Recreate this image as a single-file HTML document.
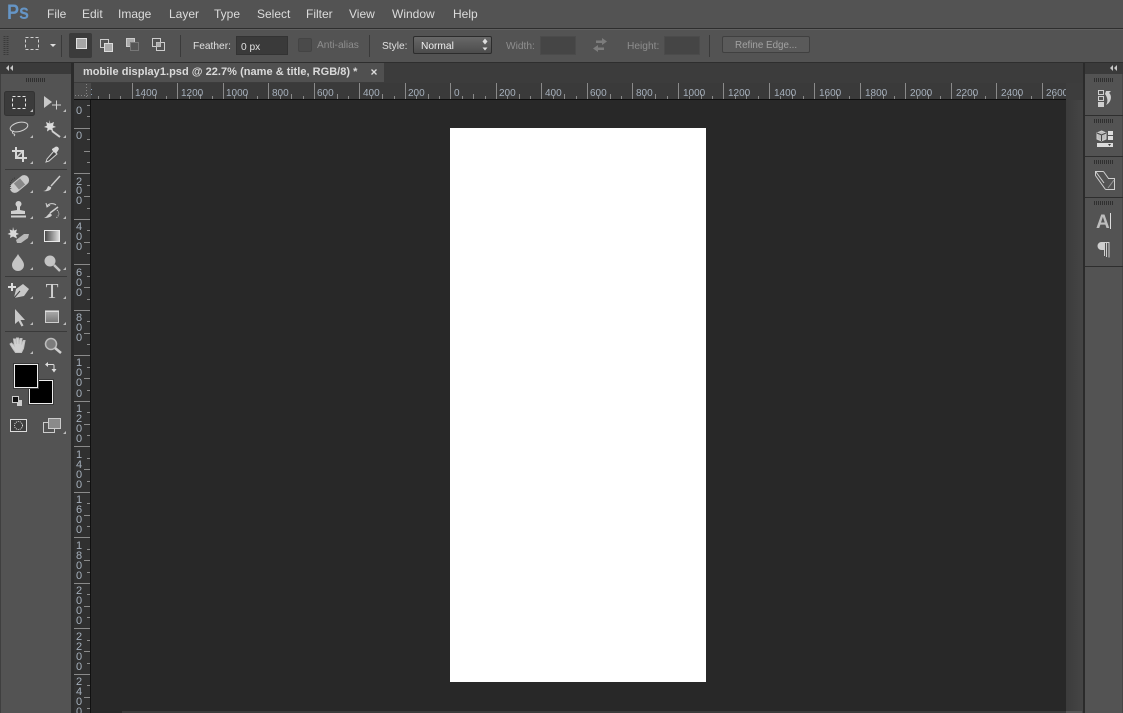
<!DOCTYPE html>
<html><head><meta charset="utf-8"><title>Photoshop</title>
<style>
html,body{margin:0;padding:0;background:#535353}
body{width:1123px;height:713px;position:relative;overflow:hidden;font-family:"Liberation Sans",sans-serif;font-size:11px}
div,span.t{position:absolute}
.m{position:absolute;top:7px;color:#dcdcdc;font-size:12px;line-height:14px;white-space:nowrap}
.o{position:absolute;color:#e0e0e0;font-size:10.2px;line-height:13px;white-space:nowrap}
.d{color:#8e8e8e}
.sep{background:#3a3a3a;width:1px;top:35px;height:22px}
.inp{background:#454545;border:1px solid #4b4b4b;box-sizing:border-box}
svg{position:absolute;left:0;top:0;overflow:visible}
</style></head><body>
<div style="left:0;top:0;width:1123px;height:28px;background:#535353"></div>
<div style="left:0;top:28px;width:1123px;height:1px;background:#2e2e2e"></div>
<div style="left:0;top:29px;width:1123px;height:1px;background:#606060"></div>
<div style="left:0;top:30px;width:1123px;height:32px;background:#535353"></div>
<div style="left:0;top:62px;width:1123px;height:1px;background:#2e2e2e"></div>
<div style="left:7px;top:1px;color:#6595c6;font-weight:bold;font-size:21px;line-height:24px;transform:scaleX(.86);transform-origin:0 0">Ps</div>
<span class="m" style="left:47px">File</span><span class="m" style="left:82px">Edit</span><span class="m" style="left:118px">Image</span><span class="m" style="left:169px">Layer</span><span class="m" style="left:214px">Type</span><span class="m" style="left:257px">Select</span><span class="m" style="left:306px">Filter</span><span class="m" style="left:349px">View</span><span class="m" style="left:392px">Window</span><span class="m" style="left:453px">Help</span>

<!-- options -->
<div style="left:69px;top:33px;width:23px;height:25px;background:#3b3b3b;border-radius:2px"></div>
<div class="sep" style="left:61px"></div><div class="sep" style="left:180px"></div><div class="sep" style="left:369px"></div><div class="sep" style="left:709px"></div>
<span class="o" style="left:193px;top:40px">Feather:</span>
<div style="left:236px;top:36px;width:52px;height:19px;background:#3a3a3a;border:1px solid #333;box-sizing:border-box"></div>
<span class="o" style="left:241px;top:41px">0 px</span>
<div style="left:298px;top:38px;width:14px;height:14px;background:#4a4a4a;border:1px solid #444;border-radius:2px;box-sizing:border-box"></div>
<span class="o d" style="left:317px;top:39px">Anti-alias</span>
<span class="o" style="left:382px;top:40px">Style:</span>
<div style="left:413px;top:36px;width:79px;height:18px;box-sizing:border-box;border:1px solid #2c2c2c;border-radius:2px;background:linear-gradient(#686868,#4c4c4c)"></div>
<span class="o" style="left:421px;top:40px;color:#f0f0f0">Normal</span>
<span class="o d" style="left:506px;top:40px">Width:</span>
<div class="inp" style="left:540px;top:36px;width:36px;height:19px"></div>
<span class="o d" style="left:627px;top:40px">Height:</span>
<div class="inp" style="left:664px;top:36px;width:36px;height:19px"></div>
<div style="left:722px;top:36px;width:88px;height:17px;box-sizing:border-box;border:1px solid #404040;border-radius:2px;background:#5a5a5a"></div>
<span class="o" style="left:735px;top:39px;color:#a2a2a2;font-size:9.8px">Refine Edge...</span>

<!-- tab strip -->
<div style="left:74px;top:63px;width:1009px;height:20px;background:#3c3c3c"></div>
<div style="left:74px;top:63px;width:310px;height:19px;background:#505050"></div>
<span class="o" style="left:83px;top:66px;font-weight:bold;font-size:11px;color:#dadada;letter-spacing:.03px">mobile display1.psd @ 22.7% (name &amp; title, RGB/8) *</span>
<!-- structure -->
<div style="left:0;top:63px;width:72px;height:11px;background:#3a3a3a"></div>
<div style="left:0;top:74px;width:1px;height:639px;background:#3f3f3f"></div>
<div style="left:71px;top:63px;width:3px;height:650px;background:#2b2b2b"></div>
<div style="left:74px;top:83px;width:992px;height:16px;background:#3a3a3a"></div>
<div style="left:74px;top:99px;width:16px;height:614px;background:#303030"></div>
<div style="left:90px;top:99px;width:1px;height:614px;background:#111"></div>
<div style="left:74px;top:99px;width:992px;height:1px;background:#0e0e0e"></div>
<div style="left:91px;top:100px;width:975px;height:613px;background:#282828"></div>
<div style="left:450px;top:128px;width:256px;height:554px;background:#fff"></div>
<div style="left:1066px;top:83px;width:17px;height:630px;background:linear-gradient(90deg,#3c3c3c,#454545)"></div>
<div style="left:122px;top:711px;width:944px;height:2px;background:#3a3a3a"></div>
<div style="left:1066px;top:711px;width:16px;height:2px;background:#555"></div>
<div style="left:1083px;top:63px;width:2px;height:650px;background:#2b2b2b"></div>
<div style="left:1122px;top:74px;width:1px;height:639px;background:#454545"></div>
<div style="left:1085px;top:63px;width:38px;height:11px;background:#3a3a3a"></div>
<div style="left:1085px;top:115px;width:38px;height:1px;background:#2e2e2e"></div>
<div style="left:1085px;top:156px;width:38px;height:1px;background:#2e2e2e"></div>
<div style="left:1085px;top:197px;width:38px;height:1px;background:#2e2e2e"></div>
<div style="left:1085px;top:266px;width:38px;height:1px;background:#2e2e2e"></div>

<svg width="1123" height="713" viewBox="0 0 1123 713" font-family="Liberation Sans,sans-serif">
<!-- options icons -->
<g fill="none" stroke="#d0d0d0">
<path d="M4.500 36v19M7.500 36v19" stroke="#3a3a3a" stroke-width="2" stroke-dasharray="1 1"/>
<rect x="25.500" y="37.500" width="13" height="12" stroke-dasharray="3 2"/>
<rect x="76.500" y="38.500" width="10" height="10" fill="#a6a6a6" stroke="#e0e0e0"/>
<rect x="100.500" y="39.500" width="8" height="8" stroke="#ccc"/><rect x="104.500" y="43.500" width="8" height="8" fill="#aaa" stroke="#ddd"/>
<rect x="126.500" y="38.500" width="8" height="8" stroke="#ccc" fill="#aaa"/><rect x="130.500" y="42.500" width="8" height="8" fill="#555" stroke="#777"/>
<rect x="152.500" y="38.500" width="8" height="8" stroke="#ccc"/><rect x="156.500" y="42.500" width="8" height="8" stroke="#ccc"/><rect x="156.500" y="42.500" width="4" height="4" fill="#aaa" stroke="none"/>
</g>
<path d="M50 44h6l-3 3z" fill="#ddd"/>
<path d="M485 43.500l-2.500-3h0l2.500-3 2.500 3zM482.500 46.500h5l-2.500 3z" fill="#ddd" transform="translate(0,1)"/>
<path d="M596 40.500h6v-2.500l5 3.500-5 3.500v-2h-6zM604 47.500h-6v-2.500l-5 3.500 5 3.500v-2h6z" fill="#7c7c7c"/>
<!-- collapse arrows -->
<path d="M9 65v6l-3-3zM13 65v6l-3-3zM1113 65v6l-3-3zM1117 65v6l-3-3z" fill="#c8c8c8"/>
<!-- grips -->
<path d="M26 80h19M1094 80h19M1094 121h19M1094 162h19M1094 203h19" stroke="#2f2f2f" stroke-width="4" stroke-dasharray="1 1"/>

<!-- horizontal ruler -->
<g stroke="#8a8a8a" stroke-width="1" shape-rendering="crispEdges" fill="none">
<path d="M132.500 83v16M177.500 83v16M223.500 83v16M268.500 83v16M314.500 83v16M359.500 83v16M405.500 83v16M450.500 83v16M496.500 83v16M541.500 83v16M587.500 83v16M632.500 83v16M678.500 83v16M723.500 83v16M769.500 83v16M814.500 83v16M860.500 83v16M905.500 83v16M951.500 83v16M996.500 83v16M1042.500 83v16"/>
<path d="M98.500 96v3M109.500 94v5M120.500 96v3M143.500 96v3M155.500 94v5M166.500 96v3M189.500 96v3M200.500 94v5M212.500 96v3M234.500 96v3M246.500 94v5M257.500 96v3M280.500 96v3M291.500 94v5M303.500 96v3M325.500 96v3M337.500 94v5M348.500 96v3M371.500 96v3M382.500 94v5M394.500 96v3M416.500 96v3M428.500 94v5M439.500 96v3M462.500 96v3M473.500 94v5M485.500 96v3M507.500 96v3M519.500 94v5M530.500 96v3M553.500 96v3M564.500 94v5M576.500 96v3M598.500 96v3M610.500 94v5M621.500 96v3M644.500 96v3M655.500 94v5M667.500 96v3M689.500 96v3M701.500 94v5M712.500 96v3M735.500 96v3M746.500 94v5M758.500 96v3M780.500 96v3M792.500 94v5M803.500 96v3M826.500 96v3M837.500 94v5M849.500 96v3M871.500 96v3M883.500 94v5M894.500 96v3M917.500 96v3M928.500 94v5M940.500 96v3M962.500 96v3M974.500 94v5M985.500 96v3M1008.500 96v3M1019.500 94v5M1031.500 96v3M1053.500 96v3"/>
<!-- vertical ruler ticks -->
<path d="M74 128.500h16M74 173.500h16M74 219.500h16M74 264.500h16M74 310.500h16M74 355.500h16M74 401.500h16M74 446.500h16M74 492.500h16M74 537.500h16M74 583.500h16M74 628.500h16M74 674.500h16"/>
<path d="M87 105.500h3M87 116.500h3M87 139.500h3M84 151.500h6M87 162.500h3M87 185.500h3M84 196.500h6M87 208.500h3M87 230.500h3M84 242.500h6M87 253.500h3M87 276.500h3M84 287.500h6M87 299.500h3M87 321.500h3M84 333.500h6M87 344.500h3M87 367.500h3M84 378.500h6M87 390.500h3M87 412.500h3M84 424.500h6M87 435.500h3M87 458.500h3M84 469.500h6M87 481.500h3M87 503.500h3M84 515.500h6M87 526.500h3M87 549.500h3M84 560.500h6M87 572.500h3M87 594.500h3M84 606.500h6M87 617.500h3M87 640.500h3M84 651.500h6M87 663.500h3M87 685.500h3M84 697.500h6M87 708.500h3"/>
</g>
<!-- ruler corner -->
<rect x="74" y="83" width="17" height="16" fill="#4a4a4a"/>
<path d="M86.500 84v14M75 95.500h15" stroke="#858585" stroke-dasharray="1 2" fill="none"/>
<path d="M91 89h1v1h-1zM91 94h1v1h-1z" fill="#8aa0b8"/>
<g fill="#a6b0bc" font-size="10px">
<text x="135" y="96">1400</text><text x="181" y="96">1200</text><text x="226" y="96">1000</text><text x="272" y="96">800</text><text x="317" y="96">600</text><text x="363" y="96">400</text><text x="408" y="96">200</text><text x="454" y="96">0</text><text x="499" y="96">200</text><text x="545" y="96">400</text><text x="590" y="96">600</text><text x="636" y="96">800</text><text x="683" y="96">1000</text><text x="728" y="96">1200</text><text x="774" y="96">1400</text><text x="819" y="96">1600</text><text x="865" y="96">1800</text><text x="910" y="96">2000</text><text x="956" y="96">2200</text><text x="1001" y="96">2400</text><text x="1046" y="96">2600</text>
</g>
<rect x="1066" y="83" width="17" height="17" fill="#3d3d3d"/>
<g fill="#a6b0bc" font-size="11px" text-anchor="middle">
<text x="79" y="114">0</text><text x="79" y="139">0</text>
<text x="79" y="185">2</text><text x="79" y="194">0</text><text x="79" y="204">0</text>
<text x="79" y="230">4</text><text x="79" y="240">0</text><text x="79" y="250">0</text>
<text x="79" y="276">6</text><text x="79" y="286">0</text><text x="79" y="296">0</text>
<text x="79" y="321">8</text><text x="79" y="331">0</text><text x="79" y="341">0</text>
<text x="79" y="366">1</text><text x="79" y="376">0</text><text x="79" y="386">0</text><text x="79" y="397">0</text>
<text x="79" y="412">1</text><text x="79" y="422">2</text><text x="79" y="432">0</text><text x="79" y="442">0</text>
<text x="79" y="458">1</text><text x="79" y="468">4</text><text x="79" y="478">0</text><text x="79" y="488">0</text>
<text x="79" y="503">1</text><text x="79" y="513">6</text><text x="79" y="523">0</text><text x="79" y="533">0</text>
<text x="79" y="549">1</text><text x="79" y="559">8</text><text x="79" y="569">0</text><text x="79" y="579">0</text>
<text x="79" y="594">2</text><text x="79" y="604">0</text><text x="79" y="614">0</text><text x="79" y="624">0</text>
<text x="79" y="640">2</text><text x="79" y="650">2</text><text x="79" y="660">0</text><text x="79" y="670">0</text>
<text x="79" y="685">2</text><text x="79" y="695">4</text><text x="79" y="705">0</text><text x="79" y="715">0</text>
</g>
<!-- tab close -->
<path d="M371.500 69.500l5 5M376.500 69.500l-5 5" stroke="#dcdcdc" stroke-width="1.300"/>

<!-- toolbar -->
<rect x="4.500" y="91.500" width="30" height="24" rx="2" fill="#3b3b3b" stroke="#333"/>
<path d="M5 169.500h62M5 276.500h62M5 331.500h62" stroke="#3a3a3a"/>
<!-- small triangles -->
<path d="M33 109v3h-3zM66 109v3h-3zM33 135v3h-3zM66 135v3h-3zM33 161v3h-3zM66 161v3h-3zM33 190v3h-3zM66 190v3h-3zM33 216v3h-3zM66 216v3h-3zM33 241v3h-3zM66 241v3h-3zM33 267v3h-3zM66 267v3h-3zM33 296v3h-3zM66 296v3h-3zM33 322v3h-3zM66 322v3h-3zM33 351v3h-3zM66 431v3h-3z" fill="#bbb"/>
<g fill="none" stroke="#d0d0d0">
<rect x="12.500" y="96.500" width="13" height="12" stroke="#e6e6e6" stroke-dasharray="3 2"/>
<path d="M44 96v12l8-6z" fill="#c8c8c8" stroke="none"/>
<path d="M52 105h9M56.500 100.500v9" stroke-width="1"/>
<ellipse cx="19" cy="127" rx="9" ry="4.500" transform="rotate(-14 19 127)"/>
<path d="M14 131c-3 1-1 3 0 3s1 1 0 2"/>
<path d="M52 131l8 6" stroke-width="2"/>
<path d="M49 120l1.500 3.500 3.500-1.500-1 3.500 3 1.500-3.500 1 .5 3.500-3-2-3 2 .5-3.500-3.500-1 3-1.500-1-3.500 3.500 1.500z" fill="#dcdcdc" stroke="none"/>
<path d="M16 147v11h11M12 151h11v11" stroke="#d8d8d8" stroke-width="2"/>
<path d="M17 157l5-5" stroke-width="1.500"/>
<path d="M46 162l1-3 7-8 3 3-8 7z" fill="#444"/>
<path d="M52 149l4-2.500 2 .5 1 2-2.500 4-1 .5-3.500-3.500z" fill="#d8d8d8" stroke="none"/>
<rect x="8.500" y="179" width="22" height="10" rx="5" transform="rotate(-40 19.500 184)" fill="#c8c8c8" stroke="none"/>
<rect x="15.500" y="180" width="8" height="8" transform="rotate(-40 19.500 184)" fill="#888" stroke="none"/>
<path d="M15 178c-4 1-6 7-4 11" stroke="#333" stroke-dasharray="1 1"/>
<path d="M60 176l-9 10" stroke="#ccc" stroke-width="1.500"/>
<path d="M43 191c3 0 4-2 5-5l3 1c1 2-2 5-8 4z" fill="#d0d0d0" stroke="none"/>
<circle cx="18.500" cy="204" r="3" fill="#d0d0d0" stroke="none"/>
<path d="M17 206h3v4l5 1v3h-14v-3l6-1z" fill="#d0d0d0" stroke="none"/>
<path d="M11 216.500h15" stroke-width="2"/>
<path d="M47 206c2-3 7-3 9-1M46 203l1 4 3-2" />
<path d="M58 207l-8 6" stroke-width="1.500"/><path d="M44 218c3-1 4-4 6-5l2 2c-1 2-4 3-8 3z" fill="#d0d0d0" stroke="none"/>
<path d="M57 210c3 3 2 6-1 8" stroke-dasharray="1 1"/>
<path d="M13 227l1 3.500 3-1-1 3 3 1.500-3 1 1 3.500-4-2-3 1.500.5-3-3-1 3-1.500-1-3 3 1z" fill="#d8d8d8" stroke="none"/>
<path d="M16 240l8-6h5l-1 4-7 5h-4z" fill="#b8b8b8" stroke="none"/>
<path d="M44.500 230.500h15v11h-15z" fill="url(#g1)" stroke="#e8e8e8"/>
<path d="M18 254c2 4 6 7 6 11a6 6 0 0 1-12 0c0-4 4-7 6-11z" fill="#c4c4c4" stroke="none"/>
<circle cx="50" cy="261" r="5.500" fill="#c4c4c4" stroke="none"/>
<path d="M54 265l6 6" stroke="#c4c4c4" stroke-width="2.500"/>
<path d="M8 287h8M12 283v8" stroke="#ddd" stroke-width="2"/>
<path d="M14 298l2-9 7-5 6 5-5 7z" fill="#c8c8c8" stroke="none"/>
<path d="M14 298l6-7" stroke="#444"/>
<path d="M15 309v15l3.500-3 3 5.500 2-1-3-5.500h4.500z" fill="#c8c8c8" stroke="none"/>
<rect x="45.500" y="311.500" width="13" height="11" fill="url(#g2)" stroke="#cfcfcf"/>
<path d="M45 311h14" stroke="#eee"/>
<path d="M13 349l-3-5 1.500-1 3 3-1-7h2l1 5 0-6h2l.5 6 1-5.500h2l-.5 6 2-4h1.500l-1.500 8-2 4h-6z" fill="#d0d0d0" stroke="#c0c0c0"/>
<circle cx="51" cy="344" r="5.500" fill="#7c7c7c" stroke="#bcbcbc" stroke-width="1.500"/>
<path d="M55 348l6 5" stroke="#cfcfcf" stroke-width="2.500"/>
</g>
<defs>
<linearGradient id="g1"><stop offset="0" stop-color="#444"/><stop offset="1" stop-color="#e0e0e0"/></linearGradient>
<linearGradient id="g2" x2="0" y2="1"><stop offset="0" stop-color="#aaa"/><stop offset="1" stop-color="#777"/></linearGradient>
</defs>
<text x="52" y="298" text-anchor="middle" font-family="Liberation Serif,serif" font-size="21px" fill="#cfcfcf">T</text>
<!-- swatches -->
<rect x="28.500" y="379.500" width="25" height="25" fill="#000" stroke="#3a3a3a"/><rect x="29.500" y="380.500" width="23" height="23" fill="#000" stroke="#eee"/>
<rect x="13.500" y="363.500" width="25" height="25" fill="#000" stroke="#3a3a3a"/><rect x="14.500" y="364.500" width="23" height="23" fill="#000" stroke="#eee"/>
<path d="M47 364.500h6a1 1 0 0 1 1 1v4" fill="none" stroke="#ddd"/><path d="M45 364.500l3-2.500v5zM51.500 369h5l-2.500 3.500z" fill="#ddd"/>
<rect x="17" y="400" width="5" height="6" fill="#ccc"/><rect x="12.500" y="396.500" width="6" height="6" fill="#111" stroke="#ccc"/>
<rect x="10.500" y="419.500" width="16" height="12" fill="#3e3e3e" stroke="#ddd"/>
<circle cx="18.500" cy="425.500" r="4" fill="none" stroke="#ddd" stroke-dasharray="1 1"/>
<rect x="43.500" y="422.500" width="11" height="10" fill="none" stroke="#ccc"/>
<rect x="48.500" y="418.500" width="12" height="10" fill="#8a8a8a" stroke="#ccc"/>

<!-- right dock icons -->
<g fill="none" stroke="#cfcfcf">
<rect x="1098.500" y="90.500" width="5" height="4"/><rect x="1098.500" y="96.500" width="5" height="4"/><rect x="1098" y="102" width="6" height="5" fill="#cfcfcf" stroke="none"/>
<path d="M1106 91h5l-2 2c3 2 3 9-3 12 2-3 2-7-1-11z" fill="#cfcfcf" stroke="none"/>
<path d="M1101.500 131l4.500 2v6l-4.500 2-4.500-2v-6z" fill="#bbb"/><path d="M1097 133l4.500 2 4.500-2M1101.500 135v6" stroke="#444"/>
<rect x="1108" y="131" width="5" height="4" fill="#dcdcdc" stroke="none"/><rect x="1108" y="136" width="5" height="4" fill="#dcdcdc" stroke="none"/>
<rect x="1097" y="143" width="16" height="4" fill="#dcdcdc" stroke="none"/><path d="M1108 144h3l-1.500 2z" fill="#333" stroke="none"/>
<path d="M1103.500 171.500h-8v4l10 14M1103.500 171.500l5 7M1096 172l8 11"/>
<path d="M1108 178.500h6.500v11h-9" /><path d="M1108 188l6-8" stroke="#999"/>
<path d="M1110.500 213v16" stroke="#ddd"/>
<path d="M1104 242.500h5v15M1106.500 243v14" stroke="#cfcfcf" stroke-width="1"/>
<path d="M1104.500 242h-3a3.500 3.500 0 0 0 0 8h3z" fill="#cfcfcf" stroke="none"/>
<path d="M1104.500 242v14" stroke="#cfcfcf" stroke-width="1"/>
</g>
<text x="1096" y="228" font-size="19px" font-weight="bold" fill="#bdbdbd">A</text>
</svg>
</body></html>
